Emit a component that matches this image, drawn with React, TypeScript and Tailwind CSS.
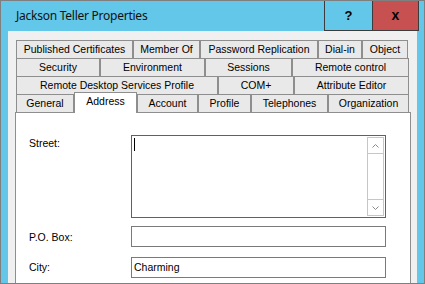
import React from "react";

type Tab = { label: string; w: number; active?: boolean };

const rows: Tab[][] = [
  [
    { label: "Published Certificates", w: 117 },
    { label: "Member Of", w: 67 },
    { label: "Password Replication", w: 118 },
    { label: "Dial-in", w: 44 },
    { label: "Object", w: 46 },
  ],
  [
    { label: "Security", w: 84 },
    { label: "Environment", w: 105 },
    { label: "Sessions", w: 87 },
    { label: "Remote control", w: 117 },
  ],
  [
    { label: "Remote Desktop Services Profile", w: 202 },
    { label: "COM+", w: 76 },
    { label: "Attribute Editor", w: 115 },
  ],
  [
    { label: "General", w: 58 },
    { label: "Address", w: 63, active: true },
    { label: "Account", w: 61 },
    { label: "Profile", w: 53 },
    { label: "Telephones", w: 77 },
    { label: "Organization", w: 81 },
  ],
];

function TabButton({ tab }: { tab: Tab }) {
  if (tab.active) {
    return (
      <div
        className="relative z-10 -mb-px flex h-[21px] shrink-0 items-start justify-center border-x border-t border-[#8e8e8e] bg-white pt-[1px]"
        style={{ width: tab.w }}
      >
        {tab.label}
      </div>
    );
  }
  return (
    <div
      className="flex h-[18px] shrink-0 items-center justify-center border-x border-t border-[#8e8e8e] bg-[#e9e9e9]"
      style={{ width: tab.w }}
    >
      {tab.label}
    </div>
  );
}

function Input({ value }: { value?: string }) {
  return (
    <div className="flex h-[21px] w-[255px] items-center border border-[#7a7a7a] bg-white pl-[2px]">
      {value}
    </div>
  );
}

export default function App() {
  return (
    <div className="h-[284px] w-[425px] overflow-hidden border border-[#7f7f7f] bg-[#63c7ea] font-['Liberation_Sans',Arial,sans-serif] text-[10.5px] text-black">
      {/* title bar */}
      <div className="flex h-[30px] items-start justify-between">
        <div className="pl-[15px] pt-[6px] font-['Noto_Sans',sans-serif] text-[12px] tracking-[-0.25px] text-[#111]">
          Jackson Teller Properties
        </div>
        <div className="mr-[5px] flex h-[30px] border-b border-[#3c3c3c]">
          <div className="flex w-[48px] items-center justify-center border-l border-[#3c3c3c] font-['Liberation_Sans',sans-serif] text-[13px] font-bold">
            ?
          </div>
          <div className="flex w-[47px] items-center justify-center border-x border-[#3c3c3c] bg-[#c75050] pb-[1px] font-['Liberation_Sans',sans-serif] text-[14px] font-bold">
            x
          </div>
        </div>
      </div>

      {/* client area */}
      <div className="ml-[7px] h-[253px] w-[409px] bg-[#f0f0f0] pt-[9px]">
        <div className="ml-[7px] w-[396px]">
          {rows.map((row, i) => (
            <div key={i} className={`ml-px flex h-[18px] ${i === 3 ? "items-end" : ""}`}>
              {row.map((t) => (
                <TabButton key={t.label} tab={t} />
              ))}
            </div>
          ))}
          <div className="h-[200px] border border-[#8e8e8e] bg-white pl-[13px] pt-[22px]">
            <div className="flex">
              <div className="w-[102px] pt-[1px]">Street:</div>
              <div className="flex h-[83px] w-[255px] border border-[#3c6a92] bg-white">
                <div className="flex-1 pl-[2px] pt-[2px]">
                  <div className="h-[13px] w-px bg-black" />
                </div>
                <div className="my-px mr-px flex w-[17px] flex-col border border-[#c6c6c6]">
                  <div className="flex h-[16px] items-center justify-center border-b border-[#c6c6c6]">
                    <svg width="7" height="4" viewBox="0 0 7 4">
                      <path d="M0.5 3.5 L3.5 0.5 L6.5 3.5" fill="none" stroke="#8a8a8a" strokeWidth="1" />
                    </svg>
                  </div>
                  <div className="flex-1" />
                  <div className="flex h-[16px] items-center justify-center border-t border-[#c6c6c6]">
                    <svg width="7" height="4" viewBox="0 0 7 4">
                      <path d="M0.5 0.5 L3.5 3.5 L6.5 0.5" fill="none" stroke="#8a8a8a" strokeWidth="1" />
                    </svg>
                  </div>
                </div>
              </div>
            </div>
            <div className="mt-[8px] flex items-center">
              <div className="w-[102px] pt-[2px]">P.O. Box:</div>
              <Input />
            </div>
            <div className="mt-[10px] flex items-center">
              <div className="w-[102px]">City:</div>
              <Input value="Charming" />
            </div>
          </div>
        </div>
      </div>
    </div>
  );
}
